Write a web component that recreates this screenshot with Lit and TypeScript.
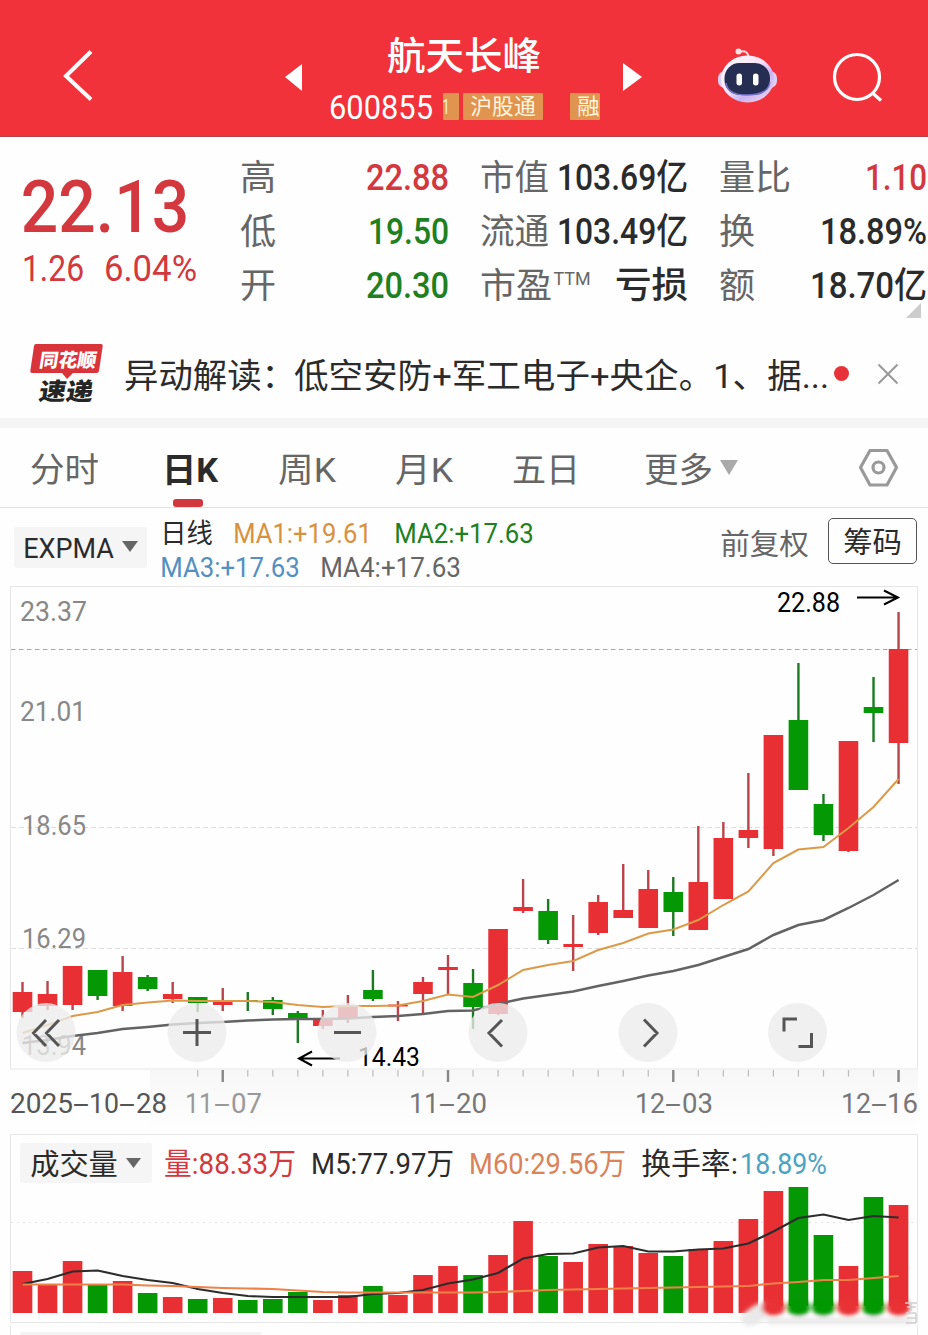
import { LitElement, html, svg, css } from "lit";
import { customElement } from "lit/decorators.js";

type Candle = [number, number, number, number, "r" | "g"];

const STEP = 25.03;
const cx = (i: number) => 22.5 + i * STEP;

// wick top, body top, body bottom, wick bottom, direction
const CANDLES: Candle[] = [
  [982, 992, 1012, 1018, "r"], [981, 994, 1006, 1010, "r"], [966, 966, 1005, 1010, "r"],
  [970, 970, 996, 1000, "g"], [956, 972, 1006, 1011, "r"], [975, 977, 989, 991, "g"],
  [982, 994, 999, 1003, "r"], [997, 997, 1003, 1012, "g"], [988, 1000, 1005, 1011, "r"],
  [992, 1000, 1002, 1011, "g"], [997, 1000, 1009, 1015, "g"], [1011, 1013, 1019, 1043, "g"],
  [1010, 1018, 1026, 1029, "r"], [995, 1006, 1019, 1023, "r"], [970, 990, 999, 1001, "g"],
  [1001, 1004.5, 1006.5, 1021, "r"], [977, 982, 994, 1014, "r"], [955, 967, 970, 994, "r"],
  [969, 983, 1007, 1029, "g"], [929, 929, 1014, 1015, "r"], [879, 907, 911, 913, "r"],
  [899, 911, 940, 944, "g"], [915, 944, 947, 971, "r"], [895, 902, 933, 935, "r"],
  [864, 910, 918, 918, "r"], [870, 889, 928, 928, "r"], [877, 892, 912, 936, "g"],
  [826, 882, 930, 930, "r"], [822, 838, 899, 899, "r"], [773, 830, 838, 848, "r"],
  [735, 735, 849, 856, "r"], [663, 720, 790, 790, "g"], [794, 804, 835, 841, "g"],
  [741, 741, 851, 852, "r"], [677, 707, 713, 742, "g"], [612, 649, 743, 784, "r"],
];

const MA_FAST = [1033, 1025, 1016, 1012, 1005, 1002.5, 1000.5, 1001, 1001, 1001, 1002, 1005, 1007,
  1006, 1006, 1005.5, 1001, 994.5, 997, 985, 970, 965, 961, 950, 943, 933.5, 929.5, 920, 905,
  891.5, 863, 849.5, 847, 828, 807, 779];
const MA_SLOW = [1043, 1040, 1036, 1033, 1029, 1027, 1024.5, 1023, 1022, 1020.5, 1019.5, 1019, 1019,
  1018.5, 1017, 1016, 1014, 1011, 1010.5, 1004, 998.5, 995, 991.5, 986, 981, 975.5, 971, 965, 957,
  949, 935, 925, 920, 908, 895, 880];

const VOLUME_TOPS = [1271, 1285, 1261, 1284, 1281, 1293, 1297, 1299, 1298, 1300, 1299, 1292, 1300,
  1295, 1286, 1295, 1275, 1266, 1275, 1255, 1221, 1256, 1262, 1244, 1246, 1253, 1256, 1249, 1241,
  1219, 1191, 1187, 1235, 1266, 1197, 1205];
const VOL_M5 = [1284, 1279, 1271.5, 1270.5, 1276, 1280, 1283, 1289, 1293, 1296, 1297, 1297, 1297,
  1297, 1294, 1293, 1290, 1283.5, 1279.5, 1273, 1258.5, 1254, 1253.5, 1247.5, 1246, 1251.5, 1251.5,
  1249.5, 1248.5, 1243.5, 1231.5, 1218, 1214.5, 1220, 1216, 1217.5];
const VOL_M60 = [1284.5, 1284.5, 1284.5, 1284.5, 1284.5, 1285.5, 1286, 1287, 1288, 1288.5, 1289,
  1290.5, 1292, 1292.5, 1292.5, 1292.5, 1292.5, 1292.5, 1292.5, 1292, 1291, 1290, 1289.5, 1289,
  1288.5, 1288, 1287.5, 1287, 1286.5, 1286, 1283.5, 1282, 1280, 1280, 1278, 1276];

const line = (ys: number[]) => ys.map((y, i) => `${cx(i).toFixed(1)},${y}`).join(" ");

// One line of text fitted to an exact width; the box is as tall as the capitals.
const fit = (text: string, w: number, cap: number, cls = "", size = cap / 0.711) => html`
  <svg class="fit ${cls}" width=${w} height=${cap} lang="zh-CN">
    <text x=${-0.03 * size} y=${cap} font-size=${size} textLength=${w + 0.06 * size}
      lengthAdjust="spacingAndGlyphs">${text}</text>
  </svg>`;

const mark = (text: string, x: number, y: number, w: number, cap: number, cls: string) => svg`
  <text class=${cls} x=${x - 1} y=${y} font-size=${cap / 0.711} textLength=${w + 2}
    lengthAdjust="spacingAndGlyphs">${text}</text>`;

// A date label whose parts keep narrow digits around wide hyphens: [text, x, width] per part.
const date = (parts: [string, number, number][], cls = "date") => svg`
  <text class=${cls} y="1112.500" font-size="27.400">${parts.map(([s, x, w]) => svg`<tspan x=${x} textLength=${w}
    lengthAdjust="spacingAndGlyphs">${s}</tspan>`)}</text>`;

const shared = css`
  :host { display: block; font-family: Roboto, "Noto Sans CJK SC", sans-serif; }
  svg { display: block; flex: none; overflow: visible; }
  .fit text { fill: currentColor; }
  .red { color: #d2383e; }
  .green { color: #1e801e; }
  .dark { color: #2b2b2b; }
  .grey { color: #666; }
  .medium { font-weight: 500; }
  .bold { font-weight: 700; }
`;

@customElement("stock-header")
export class StockHeader extends LitElement {
  static styles = [shared, css`
    .bar { display: flex; height: 137px; background: #f1323a; color: #fff; box-sizing: border-box;
      border-bottom: 1px solid #b5424c; }
    .back { margin: 50px 0 0 62px; }
    .prev { margin: 63px 0 0 192px; }
    .next { margin: 63px 0 0 22px; }
    .center { width: 270px; margin-left: 25px; padding-top: 41px; }
    .title { padding-left: 58px; }
    .sub { display: flex; align-items: flex-start; margin-top: 24px; height: 27px; }
    .code { padding-top: 2px; width: 113px; }
    .tag { height: 27px; background: #e19450; color: #fff5df; display: flex; box-sizing: border-box;
      overflow: hidden; border-radius: 1px; padding-top: 5px; }
    .one { width: 16px; padding: 6px 0 0 0; margin-right: 4px; }
    .hgt { width: 80px; padding-left: 8px; margin-right: 27px; }
    .rong { width: 30px; padding-left: 8px; }
    .robot { margin: 46px 0 0 75px; }
    .search { margin: 51px 0 0 54px; }
  `];
  render() {
    return html`<div class="bar">
      <svg class="back" width="32" height="52" fill="none" stroke="#fff" stroke-width="4">
        <path d="M29 1.5 4 26l25 23.5"/></svg>
      <svg class="prev" width="19" height="28"><path d="M-2 14 15 1v27z" transform="translate(1 0)" fill="#fff"/></svg>
      <div class="center">
        <div class="title">${fit("航天长峰", 152, 28, "medium", 38)}</div>
        <div class="sub">
          <div class="code">${fit("600855", 102, 24)}</div>
          <div class="tag one">${fit("1", 6, 15)}</div>
          <div class="tag hgt">${fit("沪股通", 64, 16, "", 21.5)}</div>
          <div class="tag rong">${fit("融", 21, 16, "", 21.5)}</div>
        </div>
      </div>
      <svg class="next" width="20" height="28"><path d="M1 0v28l19-14z" fill="#fff"/></svg>
      <svg class="robot" width="60" height="60" viewBox="718 46 60 60">
        <defs>
          <linearGradient id="shell" x1="0" y1="0" x2="1" y2="1">
            <stop offset="0" stop-color="#fff"/><stop offset=".45" stop-color="#f6e3f8"/>
            <stop offset=".65" stop-color="#c9b4f2"/><stop offset="1" stop-color="#fbdcea"/>
          </linearGradient>
        </defs>
        <path d="M740 52c6-2 9 0 10 6" fill="none" stroke="#ffd9dd" stroke-width="2"/>
        <circle cx="739.5" cy="51.5" r="3" fill="#ffe3e5"/>
        <rect x="719" y="71" width="59" height="17" rx="7" fill="#ddd0f6"/>
        <ellipse cx="748.5" cy="79" rx="26.5" ry="23.5" fill="url(#shell)"/>
        <rect x="725.5" y="63" width="45.500" height="32" rx="15" fill="#262d52"/>
        <path d="M727 83c1 8 8 12 21 12s22-4 23-13" fill="none" stroke="#7478cf" stroke-width="1.500"/>
        <rect x="737.5" y="73.500" width="5.500" height="12" rx="2.700" fill="#fff"/>
        <rect x="754" y="73.500" width="5.500" height="12" rx="2.700" fill="#fff"/>
      </svg>
      <svg class="search" width="54" height="54" viewBox="832 51 54 54" fill="none" stroke="#fff" stroke-width="3.200">
        <circle cx="858" cy="77" r="22.500"/><path d="m873.500 93 8.500 7.500"/></svg>
    </div>`;
  }
}

@customElement("quote-panel")
export class QuotePanel extends LitElement {
  static styles = [shared, css`
    .panel { display: flex; height: 188px; }
    .price { width: 241px; box-sizing: border-box; padding: 43px 0 0 23px; }
    .change { display: flex; gap: 22px; margin-top: 23px; }
    .grid { display: grid; grid-template-columns: 207px 206px 208px; column-gap: 33px;
      grid-template-rows: 26px 26px 26px; row-gap: 28px; padding-top: 27px; width: 687px; height: 134px; }
    .cell { display: flex; justify-content: space-between; }
    .cell:nth-child(3n) { padding-right: 2px; }
    .pe { display: flex; gap: 3px; }
    .wrap { display: block; }
    .more { display: flex; justify-content: flex-end; padding: 5px 7px 0 0; }
  `];
  render() {
    const cell = (label: unknown, value: unknown) => html`<div class="cell">${label}${value}</div>`;
    const name = (s: string, w: number) => fit(s, w, 26, "grey", 35.5);
    const num = (s: string, w: number, c: string) => fit(s, w, 26, c + " medium");
    return html`<div class="panel">
      <div class="price">
        ${fit("22.13", 164, 52, "red medium")}
        <div class="change">${fit("1.26", 60, 26, "red")}${fit("6.04%", 91, 26, "red")}</div>
      </div>
      <div class="wrap">
        <div class="grid">
          ${cell(name("高", 34), num("22.88", 81, "red"))}
          ${cell(name("市值", 67), num("103.69亿", 129, "dark"))}
          ${cell(name("量比", 70), num("1.10", 60, "red"))}
          ${cell(name("低", 34), num("19.50", 79, "green"))}
          ${cell(name("流通", 67), num("103.49亿", 129, "dark"))}
          ${cell(name("换", 34), num("18.89%", 105, "dark"))}
          ${cell(name("开", 34), num("20.30", 81, "green"))}
          ${cell(html`<div class="pe">${name("市盈", 70)}${fit("TTM", 36, 13, "grey")}</div>`, fit("亏损", 71, 26, "dark medium", 36))}
          ${cell(name("额", 34), num("18.70亿", 115, "dark"))}
        </div>
        <div class="more"><svg width="15" height="15"><path d="M15 0v15H0z" fill="#ccc"/></svg></div>
      </div>
    </div>`;
  }
}

@customElement("news-strip")
export class NewsStrip extends LitElement {
  static styles = [shared, css`
    .strip { display: flex; height: 93px; border-bottom: 10px solid #f5f5f5; }
    .logo { margin: 17px 0 0 29px; }
    .logo text { font-family: "Noto Sans CJK SC", sans-serif; font-weight: 900; }
    .lead { margin: 38px 0 0 21px; }
    .body { margin-top: 38px; }
    .dot { width: 15px; height: 15px; border-radius: 50%; background: #e63238; margin: 41px 0 0 6px; }
    .close { margin: 39px 0 0 29px; }
  `];
  render() {
    return html`<div class="strip">
      <svg class="logo" width="75" height="62" viewBox="29 342 75 62" lang="zh-CN">
        <path d="M36 344h65q2 0 1.700 2l-3.700 25q-.5 2-2.500 2H73l-6 6-5-6H32q-2 0-1.700-2l3.700-25q.3-2 2-2z" fill="#d9343a"/>
        <text transform="translate(38.500 367) skewX(-9)" font-size="19" textLength="57" lengthAdjust="spacingAndGlyphs" fill="#fff">同花顺</text>
        <text transform="translate(38 400) skewX(-9)" font-size="24" textLength="54" lengthAdjust="spacingAndGlyphs" fill="#252525">速递</text>
      </svg>
      <div class="lead">${fit("异动解读：", 170, 25, "dark", 34)}</div>
      <div class="body">${fit("低空安防+军工电子+央企。1、据...", 533, 25, "dark", 34)}</div>
      <div class="dot"></div>
      <svg class="close" width="20" height="20" stroke="#999" stroke-width="2"><path d="m.5.5 19 19m0-19-19 19"/></svg>
    </div>`;
  }
}

@customElement("period-tabs")
export class PeriodTabs extends LitElement {
  static styles = [shared, css`
    .tabs { display: flex; height: 80px; box-sizing: border-box; border-bottom: 1px solid #e3e3e3; padding: 28px 30px 0 31px; }
    .tab { height: 50px; padding-top: 1px; }
    .active { margin: 0 62px 0 65px; display: flex; flex-direction: column; }
    .under { width: 30px; height: 8px; border-radius: 3px; background: #d2373d; margin: 17px 0 0 10px; }
    .week { margin-right: 61px; }
    .month { margin-right: 61px; }
    .five { margin-right: 66px; }
    .tri { margin: 4px 0 0 8px; }
    .gear { margin: -8px 0 0 auto; }
  `];
  render() {
    const t = (s: string, w: number, c: string) => fit(s, w, 25, c, 34);
    return html`<div class="tabs">
      <div class="tab">${t("分时", 67, "grey")}</div>
      <div class="tab active">${t("日K", 54, "dark bold")}<div class="under"></div></div>
      <div class="tab week">${t("周K", 56, "grey")}</div>
      <div class="tab month">${t("月K", 56, "grey")}</div>
      <div class="tab five">${t("五日", 66, "grey")}</div>
      <div class="tab">${t("更多", 67, "grey")}</div>
      <svg class="tri" width="18" height="15"><path d="M0 0h18L9 15z" fill="#aaa"/></svg>
      <svg class="gear" width="40" height="40" viewBox="858 448 40 40" fill="none" stroke="#999" stroke-width="3.200" stroke-linejoin="round">
        <path d="M870 450.500h17l9.500 17-9.500 17.500h-17l-9.500-17.500z"/><circle cx="878.500" cy="467.500" r="5.500"/></svg>
    </div>`;
  }
}

@customElement("indicator-legend")
export class IndicatorLegend extends LitElement {
  static styles = [shared, css`
    .legend { display: flex; height: 78px; }
    .pick { display: flex; width: 133px; height: 41px; box-sizing: border-box; background: #f5f5f5; border-radius: 3px;
      margin: 19px 0 0 14px; padding: 11px 0 0 10px; gap: 9px; }
    .tri { margin-top: 3px; }
    .lines { margin-left: 14px; padding-top: 15px; width: 560px; }
    .row { display: flex; height: 34px; }
    .a { margin-left: 22px; }
    .b { margin-left: 24px; }
    .c { margin-left: 22px; }
    .orange { color: #d8913e; }
    .blue { color: #5490bf; }
    .adj { padding-top: 26px; }
    .chips { box-sizing: border-box; width: 89px; height: 46px; border: 1px solid #555; border-radius: 5px;
      margin: 10px 0 0 20px; padding: 13px 0 0 15px; }
  `];
  render() {
    return html`<div class="legend">
      <div class="pick">${fit("EXPMA", 89, 20, "dark")}
        <svg class="tri" width="16" height="11"><path d="M0 0h16L8 11z" fill="#666"/></svg></div>
      <div class="lines">
        <div class="row">${fit("日线", 51, 20, "dark", 27)}
          <div class="a">${fit("MA1:+19.61", 137, 20, "orange")}</div>
          <div class="b">${fit("MA2:+17.63", 138, 20, "green")}</div></div>
        <div class="row">${fit("MA3:+17.63", 138, 20, "blue")}
          <div class="c">${fit("MA4:+17.63", 139, 20, "grey")}</div></div>
      </div>
      <div class="adj">${fit("前复权", 87, 21, "grey", 29)}</div>
      <div class="chips">${fit("筹码", 57, 21, "dark", 29)}</div>
    </div>`;
  }
}

@customElement("candle-chart")
export class CandleChart extends LitElement {
  static styles = [shared, css`
    .up { fill: #e83034; }
    .down { fill: #059805; }
    .wu { fill: #b8454b; }
    .wd { fill: #1d7a22; }
    .axis { fill: #888; }
    .date { fill: #777; }
    .first { fill: #555; }
    .pale { fill: #999; }
    .note { fill: #000; }
    .frame { fill: none; stroke: #e6e6e6; }
    .soft { stroke: #dedede; stroke-dasharray: 5 3; }
    .level { stroke: #a9a98c; stroke-dasharray: 4.500 3.500; }
    .fast { fill: none; stroke: #dc9a48; stroke-width: 2; }
    .slow { fill: none; stroke: #636363; stroke-width: 2.500; }
    .arrow { fill: none; stroke: #000; stroke-width: 2; }
    .disc { fill: #ececec; fill-opacity: .78; }
    .glyph { fill: none; stroke: #555; stroke-width: 3; }
  `];
  render() {
    return html`<svg width="928" height="548" viewBox="0 586 928 548">
      <defs><linearGradient id="fade" x1="0" y1="0" x2="0" y2="1">
        <stop offset="0" stop-color="#f7f7f7"/><stop offset="1" stop-color="#fefefe"/></linearGradient></defs>
      <rect x="150" y="1070" width="768" height="60" fill="url(#fade)"/>
      <rect class="frame" x="10.5" y="586.5" width="907" height="482.500"/>
      <path class="soft" d="M11 827.5h906M11 948.5h906"/>
      <path class="level" d="M11 649.500h906"/>
      ${mark("23.37", 21, 620.5, 65, 19.5, "axis")}
      ${mark("21.01", 21, 720.5, 64, 19.5, "axis")}
      ${mark("18.65", 23, 834.5, 62, 19.5, "axis")}
      ${mark("16.29", 23, 948, 62, 19.5, "axis")}
      ${mark("13.94", 23, 1054.5, 62, 19.5, "axis")}
      ${CANDLES.map(([wt, t, b, wb, d], i) => svg`
        <rect class=${d === "r" ? "wu" : "wd"} x=${cx(i) - 1.2} y=${wt} width="2.400" height=${wb - wt}/>
        <rect class=${d === "r" ? "up" : "down"} x=${cx(i) - 9.8} y=${t} width="19.600" height=${b - t}/>`)}
      <polyline class="slow" points=${line(MA_SLOW)}/>
      <polyline class="fast" points=${line(MA_FAST)}/>
      ${mark("22.88", 778, 611.5, 61, 19, "note")}
      ${mark("14.43", 359, 1065.5, 60, 18, "note")}
      <path class="arrow" d="M857 597.500h40M884 590.500l14 7-14 7M340 1058.500h-40M312 1051.500l-13 7 13 7"/>
      ${[46, 197, 347, 498, 648, 797.5].map((x) => svg`<circle class="disc" cx=${x} cy="1032.500" r="29.500"/>`)}
      <path class="glyph" d="M46 1020l-12.500 13 12.500 13M59 1020l-12.500 13 12.500 13M183 1032.500h28M197 1019v27M334 1032.500h27M502 1020l-13 13 13 13.500M644 1019.500l13 13.500-13 13.500M784 1031.500v-12.500h13M798.500 1046.500h13v-13.500"/>
      ${CANDLES.map((_, i) => i < 7 ? "" : svg`<rect x=${cx(i) - ((i + 1) % 9 ? 0.6 : 1.2)} y="1070"
        width=${(i + 1) % 9 ? 1.2 : 2.4} height=${(i + 1) % 9 ? 6.5 : 12} fill=${(i + 1) % 9 ? "#bbb" : "#888"}/>`)}
      ${date([["2025", 10, 63], ["-", 73, 16], ["10", 89, 30], ["-", 119, 16], ["28", 136, 31]], "first")}
      ${date([["11", 185, 28], ["-", 214, 16], ["07", 231, 31]], "pale")}
      ${date([["11", 409, 30], ["-", 439, 16], ["20", 456, 31]])}
      ${date([["12", 635, 30], ["-", 665, 16], ["03", 682, 31]])}
      ${date([["12", 841, 30], ["-", 871, 16], ["16", 887, 31]])}
    </svg>`;
  }
}

@customElement("volume-chart")
export class VolumeChart extends LitElement {
  static styles = [shared, css`
    .head { display: flex; height: 53px; box-sizing: border-box; margin: 0 10px; border: 1px solid #e6e6e6; border-bottom: 0; }
    .pick { display: flex; width: 132px; height: 40px; box-sizing: border-box; background: #f5f5f5; border-radius: 3px;
      margin: 8px 0 0 9px; padding: 11px 0 0 11px; gap: 9px; }
    .tri { margin-top: 4px; }
    .vals { display: flex; margin-left: 13px; padding-top: 18px; gap: 17px; }
    .turn { display: flex; gap: 4px; }
    .coral { color: #d9835a; }
    .cyan { color: #4ba3c3; }
    .up { fill: #e83034; }
    .down { fill: #059805; }
    .edge { fill: none; stroke: #e6e6e6; }
    .m5 { fill: none; stroke: #2c2c2c; stroke-width: 2.200; }
    .m60 { fill: none; stroke: #ef8148; stroke-width: 2.200; }
  `];
  render() {
    return html`
      <div class="head">
        <div class="pick">${fit("成交量", 86, 21, "dark", 29)}
          <svg class="tri" width="15" height="10"><path d="M0 0h15L7.500 10z" fill="#666"/></svg></div>
        <div class="vals">
          ${fit("量:88.33万", 130, 21, "red")}
          ${fit("M5:77.97万", 141, 21, "dark")}
          ${fit("M60:29.56万", 155, 21, "coral")}
          <div class="turn">${fit("换手率:", 95, 21, "dark")}${fit("18.89%", 85, 21, "cyan")}</div>
        </div>
      </div>
      <svg width="928" height="148" viewBox="0 1187 928 148">
        <defs><filter id="soft" x="-20%" y="-50%" width="140%" height="200%"><feGaussianBlur stdDeviation="2"/></filter></defs>
        <path class="edge" d="M10.500 1187v135.500h907V1187M10.500 1335v-10M917.500 1325v10"/>
        <path d="M11 1222.500h906" stroke="#e3e3e3" stroke-dasharray="2 4"/>
        <rect x="20" y="1332" width="242" height="8" rx="3" fill="#f3f3f3"/>
        ${VOLUME_TOPS.map((y, i) => svg`<rect class=${CANDLES[i][4] === "r" ? "up" : "down"}
          x=${cx(i) - 9.8} y=${y} width="19.600" height=${(i < 30 ? 1313 : 1306) - y}/>`)}
        <polyline class="m5" points=${line(VOL_M5)}/>
        <polyline class="m60" points=${line(VOL_M60)}/>
        <g filter="url(#soft)">
          <path d="M740 1318q12-14 24-16l2 16q-10 8-20 8zM766 1318h146v6H768z" fill="#e9e9e9"/>
          ${[30, 31, 32, 33, 34, 35].map((i) => svg`
            <ellipse class=${CANDLES[i][4] === "r" ? "up" : "down"} cx=${cx(i)} cy="1307.500" rx="11.500" ry="8.500"/>`)}
        </g>
        <path d="M905 1303h12M911 1303v8M907 1307h9M906 1313h10M907 1318h9M906 1323h10M916 1313v10" fill="none" stroke="#cfcfcf" stroke-width="1.500"/>
      </svg>`;
  }
}

@customElement("app-root")
export class AppRoot extends LitElement {
  static styles = css`
    :host { display: block; width: 928px; height: 1335px; overflow: hidden; background: #fefefe; }
  `;
  render() {
    return html`
      <stock-header></stock-header>
      <quote-panel></quote-panel>
      <news-strip></news-strip>
      <period-tabs></period-tabs>
      <indicator-legend></indicator-legend>
      <candle-chart></candle-chart>
      <volume-chart></volume-chart>`;
  }
}
